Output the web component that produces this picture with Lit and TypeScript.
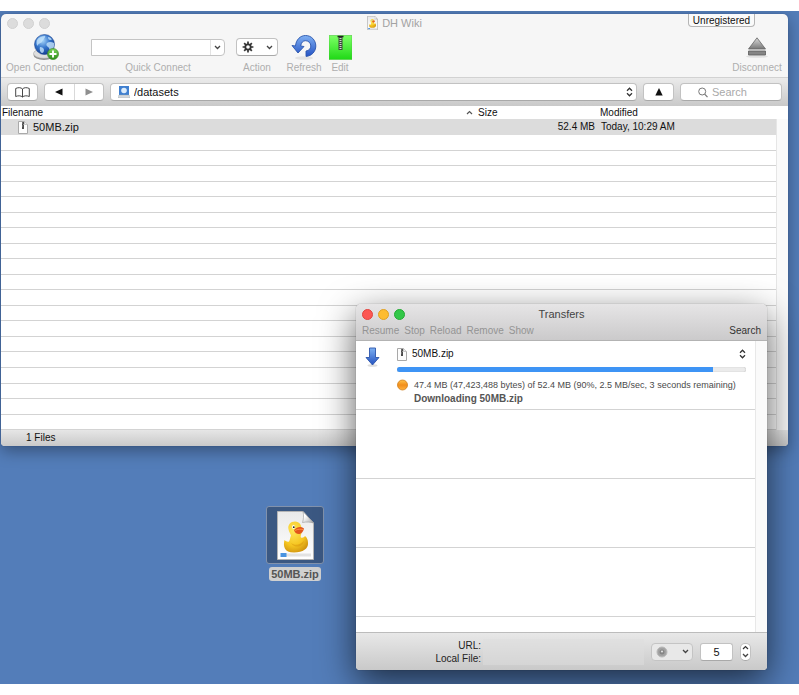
import { LitElement, html, css, svg } from "lit";
import { customElement, property } from "lit/decorators.js";

const shared = css`
  :host {
    font-family: "Liberation Sans", Helvetica, Arial, sans-serif;
    font-size: 10px;
    line-height: 12px;
    color: #111;
  }
  * { box-sizing: border-box; }
  svg { display: block; flex: none; }
  button, input, select {
    font: inherit;
    color: inherit;
    margin: 0;
    padding: 0;
    border: 0;
    background: none;
    outline: none;
    appearance: none;
    min-width: 0;
  }
  .lights { display: flex; gap: 5px; }
  .light { width: 11px; height: 11px; border-radius: 50%; background: #dcdcdc; border: 1px solid #d0d0d0; }
  .box {
    display: flex;
    align-items: center;
    justify-content: center;
    height: 18px;
    background: #fff;
    border: 1px solid #c2c2c2;
    border-bottom-color: #a9a9a9;
    border-radius: 4px;
  }
`;

const chevron = svg`<svg width="7" height="5" viewBox="0 0 7 5"><path d="M1 1l2.5 2.5L6 1" fill="none" stroke="#444" stroke-width="1.3"/></svg>`;
const upDown = svg`<svg width="7" height="10" viewBox="0 0 7 10"><path d="M1 3.7L3.5 1.2 6 3.7M1 6.3l2.5 2.5L6 6.3" fill="none" stroke="#333" stroke-width="1.3"/></svg>`;
const zipFile = svg`<svg width="10" height="13" viewBox="0 0 10 13"><path d="M.5.5H6.5L9.5 3.5v9H.5z" fill="#fdfdfd" stroke="#a9a9a9"/><path d="M6.5.5v3h3" fill="#eee" stroke="#bbb" stroke-width=".8"/><path d="M4 1h2v7H4z" fill="#4c4c4c"/><path d="M4 2h1M5 3.5h1M4 5h1" stroke="#bbb" stroke-width=".6"/></svg>`;

const duckPage = (w: number, h: number, edge: number) => svg`
  <svg width=${w} height=${h} viewBox="0 0 37 49">
    <defs>
      <linearGradient id="pg" x2="0" y2="1"><stop stop-color="#e9e9e9"/><stop offset="1" stop-color="#fff"/></linearGradient>
      <linearGradient id="fold" x2="1" y2="1"><stop offset=".3" stop-color="#fff"/><stop offset="1" stop-color="#a8a8a8"/></linearGradient>
      <radialGradient id="dk" cx=".4" cy=".3" r=".8"><stop stop-color="#ffe75a"/><stop offset=".6" stop-color="#f5c520"/><stop offset="1" stop-color="#c98a0b"/></radialGradient>
    </defs>
    <path d="M.5.5H26L36.500 12V48.500H.5z" fill="url(#pg)" stroke="#b4b4b4" stroke-width=${edge}/>
    <path d="M26 .5c1 4 .5 8-.5 11 4-.8 8-.5 11 .5z" fill="url(#fold)" stroke="#999" stroke-width=".6"/>
    <rect x="4" y="42.500" width="30" height="3" fill="#e2e2e2"/>
    <rect x="3.500" y="42" width="6" height="4" fill="#4a93e0"/>
    <path d="M7.500 29c-1.500 6-.5 12.500 9.500 12.500 9 0 14.500-4 14-9.500 0-3-1-5.500-3-7-1 1.500-2.500 2-4 1.500-1-1 .5-3 .7-6C25 14 22.500 10.500 18 10.500c-4.500 0-7.500 3.500-6.500 7.700.5 3 2 4.300 2.500 6.300-1 2.500-1 4.500-2 6C10.500 31 9 30.500 7.500 29z" fill="url(#dk)"/>
    <path d="M17 19c3-3 6.500-4 10-1.500-.5 2.500-2 5-4.500 5.500-3 .2-5-1.500-5.500-4z" fill="#e2551c"/>
    <path d="M18 19.500c3-1.500 5.500-1.500 8-1" stroke="#ff9445" stroke-width=".9" fill="none"/>
    <ellipse cx="16.500" cy="16" rx="1.400" ry="1.900" fill="#fff"/><circle cx="16.800" cy="16.200" r=".9" fill="#222"/>
    <path d="M14 32c4 3 9 2 13-2-1 6-9 8-13 2z" fill="#d9980f" opacity=".55"/>
  </svg>`;

const gear = svg`<svg width="12" height="12" viewBox="-6 -6 12 12"><g stroke="#333" stroke-width="1.700">${[0, 45, 90, 135].map(
  (a) => svg`<path d="M0-5.400V5.400" transform="rotate(${a})"/>`
)}</g><circle r="3.600" fill="#333"/><circle r="1.800" fill="#fff"/></svg>`;

const globe = svg`
  <svg width="27" height="27" viewBox="0 0 27 27">
    <defs>
      <radialGradient id="gl" cx=".4" cy=".3" r=".75"><stop stop-color="#a9d7fa"/><stop offset=".5" stop-color="#3474cb"/><stop offset="1" stop-color="#12398a"/></radialGradient>
      <linearGradient id="gr" x2="0" y2="1"><stop stop-color="#7fd45b"/><stop offset="1" stop-color="#2b8d17"/></linearGradient>
    </defs>
    <ellipse cx="12" cy="21" rx="10.500" ry="5" fill="#8f8f8f"/>
    <ellipse cx="12" cy="19.500" rx="10.500" ry="4.800" fill="#dedede" stroke="#aaa" stroke-width=".6"/>
    <circle cx="12.500" cy="10.500" r="10" fill="url(#gl)" stroke="#1b4591" stroke-width=".6"/>
    <path d="M5 6c2-3 5-4 8-4 1 1-1 2-1 3s-2 1-2 2.500S7 9 6 11 4 9 5 6zM15 9c2-1.500 5-1 7 0 1 3-1 6-3 8-2 0-1-3-3-4s-2-3-1-4zM8 13c2 0 4 1 4 3s-1 3-2 3-3-3-2-6zM16 3c2 0 3 1 4 2.500-2 1-4 .5-4-2.500z" fill="#c4e4fb" opacity=".8"/>
    <circle cx="21" cy="20" r="5.500" fill="url(#gr)" stroke="#3c8c2b" stroke-width=".7"/>
    <path d="M21 16.500v7M17.500 20h7" stroke="#fff" stroke-width="1.900"/>
  </svg>`;

const refresh = svg`
  <svg width="26" height="26" viewBox="0 0 26 26">
    <defs><linearGradient id="rf" x2="0" y2="1"><stop stop-color="#7fb0f3"/><stop offset="1" stop-color="#2553c4"/></linearGradient></defs>
    <ellipse cx="13" cy="24" rx="9" ry="1.800" fill="#e3e3e3"/>
    <path d="M1 11.500L4.500 12C5 5.500 9.500 1.500 14.500 1.500c6 0 10.300 4.800 10.300 10.500 0 5.500-4 10-9.800 10.400V17c3-.3 4.800-2.500 4.800-5 0-3-2.300-5.300-5.300-5.300-2.500 0-4.300 1.800-4.800 5.300L13 12.500 7 19z" fill="url(#rf)" stroke="#2a55ab" stroke-width=".9" stroke-linejoin="round"/>
  </svg>`;

const zipEditor = svg`
  <svg width="23" height="25" viewBox="0 0 23 25">
    <defs><linearGradient id="ze" x2="0" y2="1"><stop stop-color="#7dff66"/><stop offset="1" stop-color="#1fd916"/></linearGradient></defs>
    <path d="M0 .5h23v24H0z" fill="url(#ze)" stroke="#49c83d" stroke-width=".6"/>
    <path d="M9.500 1h4v14h-4z" fill="#3c4a3b"/><path d="M8.500 1.500h6" stroke="#222" stroke-width="1.500"/>
    <path d="M11.500 3v9" stroke="#cfcfcf" stroke-width="2" stroke-dasharray="1 1"/>
    <path d="M10.500 13.500h2" stroke="#ddd"/>
  </svg>`;

const eject = svg`
  <svg width="22" height="21" viewBox="0 0 22 21">
    <defs><linearGradient id="ej" x2="0" y2="1"><stop stop-color="#dadada"/><stop offset="1" stop-color="#777"/></linearGradient></defs>
    <ellipse cx="11" cy="19.500" rx="11" ry="1.300" fill="#e0e0e0"/>
    <path d="M11 .8L19.500 12h-17z" fill="url(#ej)" stroke="#666" stroke-width=".8"/>
    <path d="M2.500 14h17v4h-17z" fill="#858585" stroke="#5c5c5c" stroke-width=".8"/>
  </svg>`;

@customElement("browser-window")
class BrowserWindow extends LitElement {
  static styles = [
    shared,
    css`
      :host {
        display: flex;
        flex-direction: column;
        position: relative;
        background: #f6f6f6;
        border-radius: 5px 5px 4px 4px;
        overflow: hidden;
      }
      .title {
        display: grid;
        grid-template-columns: 1fr auto 1fr;
        align-items: center;
        height: 18px;
        padding: 0 6px;
        font-size: 11px;
        color: #a3a3a3;
      }
      .name { display: flex; align-items: center; gap: 4px; }
      .unregistered {
        position: absolute;
        top: 0;
        right: 33px;
        width: 67px;
        height: 13px;
        line-height: 11px;
        border: 1px solid #b5b5b5;
        border-top: 0;
        border-radius: 0 0 4px 4px;
        background: #fafafa;
      }
      .tools {
        display: flex;
        gap: 8px;
        padding: 0 6px 3px;
        color: #aeaeae;
        border-bottom: 1px solid #d2d2d2;
      }
      .tool { display: flex; flex-direction: column; align-items: center; white-space: nowrap; }
      .pic { display: flex; align-items: center; height: 30px; }
      .connect { width: 76px; }
      .quick { width: 134px; }
      .action { width: 48px; }
      .refresh { width: 30px; }
      .edit { width: 26px; }
      .disconnect { width: 50px; margin-left: auto; }
      .combo { display: flex; width: 134px; height: 17px; background: #fff; border: 1px solid #c4c4c4; border-radius: 0 4px 4px 0; }
      .combo input { flex: 1; color: #111; }
      .drop { display: flex; align-items: center; justify-content: center; width: 14px; border-left: 1px solid #e3e3e3; }
      .gear { width: 42px; gap: 12px; }
      .nav {
        display: flex;
        align-items: center;
        gap: 6px;
        height: 28px;
        padding: 0 6px;
        background: linear-gradient(#ebebeb, #c9c9c9);
      }
      .small { width: 31px; }
      .pair { width: 60px; }
      .pair button { flex: 1; display: flex; align-items: center; justify-content: center; height: 16px; }
      .pair button + button { border-left: 1px solid #d9d9d9; }
      .path { flex: 1; gap: 4px; padding: 0 3px 0 7px; font-size: 11px; }
      .path select { flex: 1; }
      .search { width: 102px; gap: 4px; padding-left: 17px; font-size: 11px; }
      .search input { width: 100%; }
      .search input::placeholder { color: #a9a9a9; }
      table { width: 100%; border-collapse: collapse; table-layout: fixed; background: #fff; }
      th { height: 13px; padding: 0 1px; font-weight: 400; text-align: left; line-height: 12px; }
      td { height: 16px; padding: 0 2px; background: #dcdcdc; white-space: nowrap; }
      .c-size { width: 122px; }
      .c-date { width: 177px; }
      .c-bar { width: 12px; }
      .sort { display: flex; justify-content: space-between; align-items: center; padding-right: 3px; }
      .file { display: flex; align-items: center; gap: 5px; padding-left: 15px; font-size: 11px; }
      .num { text-align: right; padding-right: 4px; }
      td.rail { background: #fafafa; border-left: 1px solid #e6e6e6; }
      .blank { display: flex; height: 295px; background: #fff; }
      .rows { flex: 1; display: flex; flex-direction: column; }
      .rows div { flex: 1; border-bottom: 1px solid #d3d3d3; }
      .track { width: 12px; background: #fafafa; border-left: 1px solid #e6e6e6; }
      .status { height: 16px; padding: 2px 25px; background: linear-gradient(#e6e6e6, #c9c9c9); }
    `,
  ];

  render() {
    return html`
      <div class="title">
        <div class="lights">
          <button class="light" aria-label="Close"></button><button class="light" aria-label="Minimize"></button><button class="light" aria-label="Zoom"></button>
        </div>
        <div class="name">${duckPage(11, 14, 3)}<span>DH Wiki</span></div>
      </div>
      <button class="unregistered">Unregistered</button>
      <div class="tools">
        <button class="tool connect"><span class="pic">${globe}</span>Open Connection</button>
        <div class="tool quick">
          <div class="pic"><div class="combo"><input id="quick" type="text" /><button class="drop" aria-label="History">${chevron}</button></div></div>
          <label for="quick">Quick Connect</label>
        </div>
        <button class="tool action"><span class="pic"><span class="box gear">${gear}${chevron}</span></span>Action</button>
        <button class="tool refresh"><span class="pic">${refresh}</span>Refresh</button>
        <button class="tool edit"><span class="pic">${zipEditor}</span>Edit</button>
        <button class="tool disconnect"><span class="pic">${eject}</span>Disconnect</button>
      </div>
      <div class="nav">
        <button class="box small" aria-label="Bookmarks">
          <svg width="15" height="11" viewBox="0 0 15 11"><path d="M7.500 2C6 .3 3 .3 .7 1.500V9.500C3 8.500 6 8.500 7.500 10 9 8.500 12 8.500 14.300 9.500V1.500C12 .3 9 .3 7.500 2zV10" fill="none" stroke="#333" stroke-width=".9"/></svg>
        </button>
        <div class="box pair">
          <button aria-label="Back"><svg width="8" height="8" viewBox="0 0 8 8"><path d="M0 4L7.500.5v7z" fill="#111"/></svg></button>
          <button aria-label="Forward"><svg width="8" height="8" viewBox="0 0 8 8"><path d="M8 4L.5.5v7z" fill="#8f8f8f"/></svg></button>
        </div>
        <label class="box path">
          <svg width="12" height="12" viewBox="0 0 12 12"><path d="M1 0h10v9h-10z" fill="#3f7fd0"/><path d="M1 9h10l1 1.500V12H0v-1.500z" fill="#d5d8dc" stroke="#9aa" stroke-width=".4"/><circle cx="6" cy="4.500" r="2.800" fill="#dcecfb"/></svg>
          <select aria-label="Path"><option>/datasets</option></select>
          ${upDown}
        </label>
        <button class="box small" aria-label="Up"><svg width="8" height="8" viewBox="0 0 8 8"><path d="M4 0l3.700 7.500H.3z" fill="#111"/></svg></button>
        <label class="box search">
          <svg width="10" height="11" viewBox="0 0 10 11"><circle cx="4.200" cy="4.500" r="3.500" fill="none" stroke="#777"/><path d="M6.700 7.200L9.500 10.200" stroke="#777" stroke-width="1.200"/></svg>
          <input type="text" placeholder="Search" aria-label="Search" />
        </label>
      </div>
      <table>
        <colgroup><col /><col class="c-size" /><col class="c-date" /><col class="c-bar" /></colgroup>
        <thead>
          <tr>
            <th><div class="sort">Filename <svg width="7" height="5" viewBox="0 0 7 5"><path d="M1 4l2.500-2.500L6 4" fill="none" stroke="#555" stroke-width="1.200"/></svg></div></th>
            <th>Size</th><th colspan="2">Modified</th>
          </tr>
        </thead>
        <tbody>
          <tr><td><div class="file">${zipFile}50MB.zip</div></td><td class="num">52.4 MB</td><td>Today, 10:29 AM</td><td class="rail"></td></tr>
        </tbody>
      </table>
      <div class="blank">
        <div class="rows">${Array.from({ length: 19 }, () => html`<div></div>`)}</div>
        <div class="track"></div>
      </div>
      <div class="status">1 Files</div>
    `;
  }
}

@customElement("transfer-window")
class TransferWindow extends LitElement {
  @property({ type: Number }) percent = 90.5;

  static styles = [
    shared,
    css`
      :host {
        display: flex;
        flex-direction: column;
        background: #fff;
        border-radius: 5px 5px 4px 4px;
        overflow: hidden;
      }
      .head { background: linear-gradient(#e6e5e6, #cbcacb); border-bottom: 1px solid #b3b3b3; height: 37px; }
      .title { display: grid; grid-template-columns: 1fr auto 1fr; align-items: center; height: 20px; padding: 0 6px; font-size: 11px; color: #444; }
      .red { background: #fc5753; border-color: #e0443e; }
      .amber { background: #fdbc30; border-color: #dfa023; }
      .green { background: #33c748; border-color: #24a934; }
      .tools { display: flex; gap: 5px; padding: 1px 6px 0; color: #949494; }
      .find { margin-left: auto; color: #333; }
      .list { display: flex; }
      .rows { flex: 1; min-width: 0; height: 291px; overflow: hidden; }
      .row { height: 69px; border-bottom: 1px solid #d3d3d3; }
      .track { width: 12px; background: #fafafa; border-left: 1px solid #e8e8e8; }
      .item { display: flex; align-items: flex-start; gap: 16px; padding: 6px 9px 0 8px; }
      .body { flex: 1; min-width: 0; display: flex; flex-direction: column; }
      .name { display: flex; align-items: center; gap: 5px; height: 14px; }
      .name select { flex: 1; font-size: 10px; }
      progress { appearance: none; display: block; width: 100%; height: 5px; margin: 6px 0; border: 0; }
      progress::-webkit-progress-bar { background: #ebebeb; border-radius: 3px; box-shadow: inset 0 0 1px #999; overflow: hidden; }
      progress::-webkit-progress-value { background: #3e94f5; }
      .info { display: flex; gap: 6px; color: #4a4a4a; white-space: nowrap; }
      .lines { line-height: 14px; }
      .bytes { font-size: 9px; }
      .bold { font-weight: 700; color: #555; }
      .foot {
        display: flex;
        align-items: center;
        gap: 7px;
        height: 38px;
        padding: 0 16px 0 6px;
        border-top: 1px solid #bcbcbc;
        background: linear-gradient(#e8e8e8, #c9c9c9);
      }
      .facts { flex: 1; display: grid; grid-template-columns: 119px 1fr; line-height: 13px; text-align: right; color: #222; }
      .well { grid-area: 1 / 2 / 3 / 3; margin-left: 2px; background: #dedede; opacity: 0.5; }
      .gear { width: 42px; gap: 14px; background: #e8e8e8; border-color: #c4c4c4; }
      .count { width: 33px; text-align: center; font-size: 11px; border-radius: 3px; }
      .step { display: flex; flex-direction: column; width: 11px; border-radius: 5px; }
      .step button { flex: 1; display: flex; align-items: center; }
    `,
  ];

  render() {
    return html`
      <div class="head">
        <div class="title">
          <div class="lights">
            <button class="light red" aria-label="Close"></button><button class="light amber" aria-label="Minimize"></button><button class="light green" aria-label="Zoom"></button>
          </div>
          <span>Transfers</span>
        </div>
        <div class="tools">
          ${["Resume", "Stop", "Reload", "Remove", "Show"].map((t) => html`<button>${t}</button>`)}
          <button class="find">Search</button>
        </div>
      </div>
      <div class="list">
        <div class="rows">
          <div class="row item">
            <svg width="17" height="20" viewBox="0 0 17 20">
              <defs><linearGradient id="dn" x2="0" y2="1"><stop stop-color="#7db0f2"/><stop offset="1" stop-color="#2452c0"/></linearGradient></defs>
              <ellipse cx="8.500" cy="18.500" rx="5" ry="1.300" fill="#ddd"/>
              <path d="M5.500 1h6v9.500h3.500L8.500 18 2 10.500h3.500z" fill="url(#dn)" stroke="#2c55aa" stroke-width=".9" stroke-linejoin="round"/>
            </svg>
            <div class="body">
              <label class="name">${zipFile}<select aria-label="Transfer"><option>50MB.zip</option></select>${upDown}</label>
              <progress max="100" value=${this.percent} aria-label="Progress"></progress>
              <div class="info">
                <svg width="11" height="14" viewBox="0 0 11 14">
                  <defs><linearGradient id="or" x2="0" y2="1"><stop stop-color="#ffc34a"/><stop offset=".5" stop-color="#f28e1c"/><stop offset="1" stop-color="#ffb23f"/></linearGradient></defs>
                  <circle cx="5.500" cy="7" r="5" fill="url(#or)" stroke="#cf7d1d" stroke-width=".8"/>
                </svg>
                <div class="lines">
                  <div class="bytes">47.4 MB (47,423,488 bytes) of 52.4 MB (90%, 2.5 MB/sec, 3 seconds remaining)</div>
                  <div class="bold">Downloading 50MB.zip</div>
                </div>
              </div>
            </div>
          </div>
          <div class="row"></div><div class="row"></div><div class="row"></div>
        </div>
        <div class="track"></div>
      </div>
      <div class="foot">
        <div class="facts"><span>URL:</span><div class="well"></div><span>Local File:</span></div>
        <button class="box gear" aria-label="Bandwidth">
          <svg width="12" height="12" viewBox="0 0 12 12"><circle cx="6" cy="6" r="5" fill="#a2a2a2" stroke="#b9b9b9"/><circle cx="6" cy="6" r="2.500" fill="#858585"/><circle cx="6" cy="5.500" r="1.100" fill="#ddd"/></svg>
          ${chevron}
        </button>
        <input class="box count" type="text" value="5" aria-label="Maximum transfers" />
        <div class="box step">
          <button aria-label="More"><svg width="7" height="5" viewBox="0 0 7 5"><path d="M1 4l2.500-2.500L6 4" fill="none" stroke="#333" stroke-width="1.200"/></svg></button>
          <button aria-label="Fewer">${chevron}</button>
        </div>
      </div>
    `;
  }
}

@customElement("app-root")
class AppRoot extends LitElement {
  static styles = [
    shared,
    css`
      :host { display: flex; min-height: 100vh; padding: 11px 0; box-sizing: border-box; background: #fff; }
      .desktop { position: relative; flex: 1; overflow: hidden; background: #537db9; }
      browser-window { position: absolute; top: 3px; left: 1px; right: 11px; box-shadow: 0 0 1px #24447a, 0 5px 16px rgba(0, 0, 0, 0.35); }
      transfer-window { position: absolute; top: 293px; right: 32px; width: 411px; box-shadow: 0 0 1px rgba(0, 0, 0, 0.5), 0 12px 36px rgba(0, 0, 0, 0.65); }
      .icon { position: absolute; top: 495px; left: 266px; width: 58px; display: flex; flex-direction: column; align-items: center; gap: 3px; }
      .tile { display: flex; align-items: center; justify-content: center; width: 58px; height: 58px; background: #3b5882; border: 1px solid #8292ac; border-radius: 3px; }
      .caption { padding: 1px 2px; background: #d0d0d0; border-radius: 3px; font-weight: 700; color: #555; font-size: 11px; }
    `,
  ];

  render() {
    return html`
      <main class="desktop">
        <button class="icon"><span class="tile">${duckPage(37, 49, 1)}</span><span class="caption">50MB.zip</span></button>
        <browser-window></browser-window>
        <transfer-window></transfer-window>
      </main>
    `;
  }
}
